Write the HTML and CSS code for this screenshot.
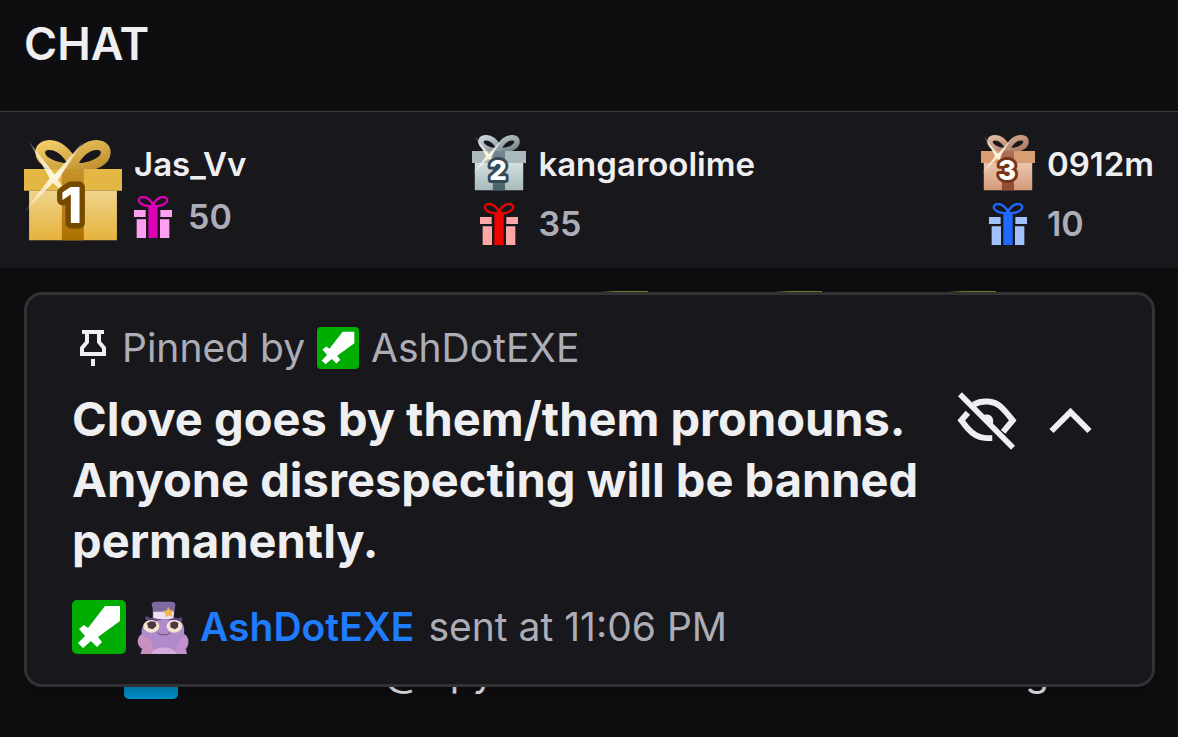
FILE: index.html
```html
<!DOCTYPE html>
<html lang="en">
<head>
<meta charset="utf-8">
<meta name="viewport" content="width=device-width, initial-scale=1">
<title>Chat</title>
<link rel="stylesheet" href="styles.css">
</head>
<body>
<svg class="defs" aria-hidden="true">
  <defs>
    <linearGradient id="gold" x1="0" y1="0" x2="0" y2="1"><stop offset="0" stop-color="#f0d48c"/><stop offset="1" stop-color="#e5b23c"/></linearGradient>
    <linearGradient id="gold-ribbon" x1="0" y1="0" x2="0" y2="1"><stop offset="0" stop-color="#c6922c"/><stop offset="1" stop-color="#ad7100"/></linearGradient>
    <linearGradient id="gold-bow" x1="0" y1="0" x2="1" y2="1"><stop offset="0" stop-color="#f0cc66"/><stop offset="1" stop-color="#bd8c2c"/></linearGradient>
    <linearGradient id="silver" x1="0" y1="0" x2="0" y2="1"><stop offset="0" stop-color="#d3dfe0"/><stop offset="1" stop-color="#a8babd"/></linearGradient>
    <linearGradient id="silver-ribbon" x1="0" y1="0" x2="0" y2="1"><stop offset="0" stop-color="#768990"/><stop offset="1" stop-color="#486068"/></linearGradient>
    <linearGradient id="silver-bow" x1="0" y1="0" x2="1" y2="1"><stop offset="0" stop-color="#c8d5d8"/><stop offset="1" stop-color="#718389"/></linearGradient>
    <linearGradient id="bronze" x1="0" y1="0" x2="0" y2="1"><stop offset="0" stop-color="#ecc5ae"/><stop offset="1" stop-color="#d39b7a"/></linearGradient>
    <linearGradient id="bronze-ribbon" x1="0" y1="0" x2="0" y2="1"><stop offset="0" stop-color="#ac705a"/><stop offset="1" stop-color="#93492d"/></linearGradient>
    <linearGradient id="bronze-bow" x1="0" y1="0" x2="1" y2="1"><stop offset="0" stop-color="#dfb79d"/><stop offset="1" stop-color="#a8745a"/></linearGradient>
    <linearGradient id="shine" x1="0" y1="0" x2="0" y2="1"><stop offset="0" stop-color="#fff" stop-opacity=".3"/><stop offset=".5" stop-color="#fff8df"/><stop offset="1" stop-color="#fff" stop-opacity=".2"/></linearGradient>
    <path id="bow" d="M145 80C125 86 92 80 70 67C42 52 39 19 71 15C102 12 129 39 145 70C161 39 188 12 219 15C251 19 248 52 220 67C198 80 165 86 145 80Z"/>
    <path id="sparkle" d="M14 4L91 102L176 4L101 118L138 176L86 127L2 212L76 113Z" fill="url(#shine)"/>
    <symbol id="gift" viewBox="0 0 114 126">
      <path class="gift-box" d="M0 42H35V63H0ZM79 42H114V63H79ZM8 70H36V126H8ZM78 70H106V126H78Z"/>
      <path class="gift-ribbon" d="M43 28H71V126H43Z"/>
      <path class="gift-bow" d="M57 28C47 32 31 31 20 22C10 14 14 3 27 3C42 3 54 17 57 28C60 17 72 3 87 3C100 3 104 14 94 22C83 31 67 32 57 28Z"/>
    </symbol>
    <symbol id="sword" viewBox="0 0 54 54">
      <rect width="54" height="54" rx="5" fill="#00ad03"/>
      <path d="M33 6H48V21L26 37L30 42L25 47L19 41L11 48L6 43L13 36L7 29L12 25L16 28Z" fill="#fff"/>
    </symbol>
  </defs>
</svg>

<main class="chat">
  <header class="chat-header"><h1 class="chat-title">CHAT</h1></header>

  <ol class="leaders">
    <li class="leader leader-first">
      <svg class="trophy" viewBox="0 0 290 297" role="img" aria-label="Rank 1">
        <path d="M112 88L145 50L178 88V150H112Z" fill="#bd9030"/>
        <use href="#bow" fill="none" stroke="url(#gold-bow)" stroke-width="29"/>
        <path d="M0 86H290V150H0Z" fill="#e4b744"/>
        <path d="M15 150H275V297H15Z" fill="url(#gold)"/>
        <path d="M112 86H177V297H112Z" fill="url(#gold-ribbon)"/>
        <use href="#sparkle"/>
        <text class="rank rank-gold" x="140" y="247">1</text>
      </svg>
      <div class="leader-info">
        <span class="leader-name">Jas_Vv</span>
        <span class="leader-score"><svg class="gift gift-pink" aria-hidden="true"><use href="#gift"/></svg>50</span>
      </div>
    </li>
    <li class="leader">
      <svg class="trophy" viewBox="0 0 290 297" role="img" aria-label="Rank 2">
        <path d="M112 88L145 50L178 88V150H112Z" fill="#74878d"/>
        <use href="#bow" fill="none" stroke="url(#silver-bow)" stroke-width="29"/>
        <path d="M0 86H290V150H0Z" fill="#a9b9bc"/>
        <path d="M15 150H275V297H15Z" fill="url(#silver)"/>
        <path d="M112 86H177V297H112Z" fill="url(#silver-ribbon)"/>
        <use href="#sparkle"/>
        <text class="rank rank-silver" x="140" y="240">2</text>
      </svg>
      <span class="leader-name">kangaroolime</span>
      <svg class="gift gift-red" aria-hidden="true"><use href="#gift"/></svg>
      <span class="leader-score">35</span>
    </li>
    <li class="leader">
      <svg class="trophy" viewBox="0 0 290 297" role="img" aria-label="Rank 3">
        <path d="M112 88L145 50L178 88V150H112Z" fill="#a8705a"/>
        <use href="#bow" fill="none" stroke="url(#bronze-bow)" stroke-width="29"/>
        <path d="M0 86H290V150H0Z" fill="#d89d72"/>
        <path d="M15 150H275V297H15Z" fill="url(#bronze)"/>
        <path d="M112 86H177V297H112Z" fill="url(#bronze-ribbon)"/>
        <use href="#sparkle"/>
        <text class="rank rank-bronze" x="140" y="240">3</text>
      </svg>
      <span class="leader-name">0912m</span>
      <svg class="gift gift-blue" aria-hidden="true"><use href="#gift"/></svg>
      <span class="leader-score">10</span>
    </li>
  </ol>

  <section class="stream">
    <div class="emotes" aria-hidden="true"><i class="emote"></i><i class="emote"></i><i class="emote"></i></div>
    <article class="pinned">
      <p class="pinned-by">
        <svg class="pin" viewBox="0 0 26 36" fill="none" stroke="#efeff1" stroke-width="4" aria-hidden="true"><path d="M2 2H24M7 2V12L2 18V24H24V18L19 12V2M13 29V36"/></svg>
        <span>Pinned by</span>
        <svg class="badge-small" aria-hidden="true"><use href="#sword"/></svg>
        <span>AshDotEXE</span>
      </p>
      <div class="pinned-body">
        <p class="pinned-text">Clove goes by them/them pronouns. Anyone disrespecting will be banned permanently.</p>
        <button class="icon-button" type="button" aria-label="Hide for yourself">
          <svg class="eye" viewBox="0 0 180 176" fill="none" stroke="#efeff1" stroke-width="17" aria-hidden="true"><path d="M8 7L169 169"/><path d="M32 63L12 86L31 110Q57 140 88 140H106M49 38C75 24 110 26 130 43Q145 56 168 86L139 121" stroke-width="18"/><path d="M76 72C97 60 115 77 107 99Z" fill="#efeff1" stroke="none"/></svg>
        </button>
        <button class="icon-button" type="button" aria-label="Collapse">
          <svg class="chevron" viewBox="0 0 42 26" fill="none" stroke="#efeff1" stroke-width="6" aria-hidden="true"><path d="M2 23L21 4L40 23"/></svg>
        </button>
      </div>
      <footer class="sender">
        <svg class="badge" aria-hidden="true"><use href="#sword"/></svg>
        <svg class="badge" viewBox="0 0 162 162" aria-hidden="true">
          <path d="M13 162L18 147C0 134 2 111 17 102C13 75 38 55 53 59Q85 50 115 59C135 53 148 78 144 101C161 109 161 134 150 147L153 162Z" fill="#b08aca"/>
          <path d="M15 107C1 119 5 138 22 146L15 162H52C56 130 43 112 15 107Z" fill="#c98fc1"/>
          <path d="M146 107C160 120 157 138 144 146L152 162H121C116 133 133 114 146 107Z" fill="#c28fcf"/>
          <path d="M46 162C51 136 114 136 123 162Z" fill="#d5acde"/>
          <path d="M28 57C25 46 36 46 42 55Q83 42 127 55C140 47 142 60 135 64Q87 52 41 68Z" fill="#604577"/>
          <path d="M50 54V24C42 6 52 5 61 5H108Q122 7 117 22L113 54Q81 60 50 54Z" fill="#8068a2"/>
          <path d="M52 35H114L112 55Q83 62 52 54Z" fill="#ece2f5"/>
          <path d="M96 20L102 31L113 31L106 40L110 50L98 47L89 52L88 41L80 34L93 31Z" fill="#f3b64f"/>
          <ellipse cx="46" cy="79" rx="24" ry="19" fill="#f4e3cf"/><ellipse cx="115" cy="79" rx="23" ry="19" fill="#f4e3cf"/>
          <path d="M33 70L44 64L58 65L61 78L50 88L37 84Z" fill="#4b383e"/>
          <path d="M103 68L115 64L127 68L126 82L116 88L103 82Z" fill="#4b383e"/>
          <path d="M64 98Q74 107 82 104Q91 107 102 98" fill="none" stroke="#664779" stroke-width="3"/>
        </svg>
        <a class="sender-name" href="#">AshDotEXE</a>
        <span class="sent-at">sent at 11:06 PM</span>
      </footer>
    </article>
    <div class="message" aria-hidden="true"><i class="message-badge"></i><span class="fragment-at">@</span><span class="fragment-py">py</span><span class="fragment-g">g</span></div>
  </section>
</main>
</body>
</html>
```
FILE: styles.css
```css
* { box-sizing: border-box; }

body {
  margin: 0;
  background: #0e0e10;
  color: #efeff1;
  font-family: Inter, "Liberation Sans", sans-serif;
}

h1, p, ol { margin: 0; padding: 0; }

.defs { position: absolute; width: 0; height: 0; }

.chat {
  display: flex;
  flex-direction: column;
  min-height: 100vh;
  overflow: hidden;
}

.chat-header {
  padding: 16px 24px 39px;
  border-bottom: 1px solid #3b3b40;
}

.chat-title {
  font-size: 45px;
  font-weight: 600;
  line-height: 56px;
}

.leaders {
  display: flex;
  justify-content: space-between;
  padding: 24px 24px 10px;
  background: #18181c;
  list-style: none;
}

.leader {
  display: grid;
  grid-template-columns: 54px auto;
  grid-template-rows: 54px 68px;
  column-gap: 12px;
  align-items: center;
  align-content: start;
  justify-items: start;
}

.leader-first {
  grid-template-columns: 98px auto;
  grid-template-rows: 108px;
}

.trophy { display: block; width: 100%; height: auto; overflow: visible; }

.leader-info { display: grid; gap: 12px; }

.leader-name {
  font-size: 33px;
  font-weight: 600;
  line-height: 40px;
  padding-top: 2px;
}

.leader-score {
  display: flex;
  align-items: center;
  gap: 16px;
  color: #adadb8;
  font-size: 34px;
  font-weight: 600;
  line-height: 40px;
}

.rank {
  font-size: 148px;
  font-weight: 800;
  text-anchor: middle;
  fill: #fff;
  stroke-width: 32px;
  stroke-linejoin: round;
  paint-order: stroke;
}
.rank-gold { stroke: #744900; }
.rank-silver { stroke: #344b54; }
.rank-bronze { stroke: #743518; }

.gift { width: 38px; height: 42px; justify-self: center; }
.gift-box { fill: var(--box); }
.gift-ribbon { fill: var(--ribbon); }
.gift-bow { fill: none; stroke: var(--ribbon); stroke-width: 7px; }
.gift-pink { --box: #ff9ff0; --ribbon: #dc00b4; }
.gift-red { --box: #ffa6a6; --ribbon: #eb0400; }
.gift-blue { --box: #a1c2ff; --ribbon: #1f69ff; }

.stream {
  flex: 1;
  position: relative;
  padding: 24px 23px 0 24px;
}

.pinned {
  position: relative;
  padding: 32px 60px 30px 45px;
  border: 3px solid #323235;
  border-radius: 18px;
  background: #18181c;
  box-shadow: 0 4px 16px rgba(0, 0, 0, .3);
}

.pinned-by {
  display: flex;
  align-items: center;
  gap: 12px;
  padding-left: 8px;
  color: #adadb8;
  font-size: 39px;
  line-height: 42px;
}

.pin { width: 26px; height: 36px; margin-right: 4px; }
.badge-small { width: 42px; height: 42px; }

.pinned-body {
  display: flex;
  align-items: flex-start;
  padding-top: 19px;
}

.pinned-text {
  flex: 1;
  font-size: 47px;
  font-weight: 700;
  line-height: 61px;
}

.icon-button {
  display: grid;
  place-items: center;
  height: 66px;
  padding: 0;
  border: 0;
  background: none;
}

.icon-button + .icon-button { margin-left: 32px; }

.eye { width: 60px; height: 58px; }
.chevron { width: 43px; height: 26px; }

.sender {
  display: flex;
  align-items: center;
  gap: 10px;
  padding-top: 29px;
  font-size: 39px;
  line-height: 54px;
}

.badge { width: 54px; height: 54px; }

.sender-name {
  color: #1f7cff;
  font-weight: 600;
  text-decoration: none;
}

.sent-at { padding-left: 4px; color: #adadb8; }

.emotes {
  position: absolute;
  top: 23px;
  left: 600px;
  display: flex;
  gap: 126px;
}

.emote {
  width: 48px;
  height: 8px;
  background: linear-gradient(90deg, transparent, #7c7c28 30%);
}

.message {
  display: flex;
  align-items: flex-end;
  height: 54px;
  margin-top: -42px;
  padding-left: 100px;
  color: #efeff1;
  font-size: 39px;
  line-height: 54px;
}

.message-badge {
  width: 54px;
  height: 54px;
  border-radius: 5px;
  background: #0093d1;
}

.fragment-at { margin-left: 206px; }
.fragment-py { margin-left: 28px; }
.fragment-g { margin-left: auto; padding-right: 106px; }
```
